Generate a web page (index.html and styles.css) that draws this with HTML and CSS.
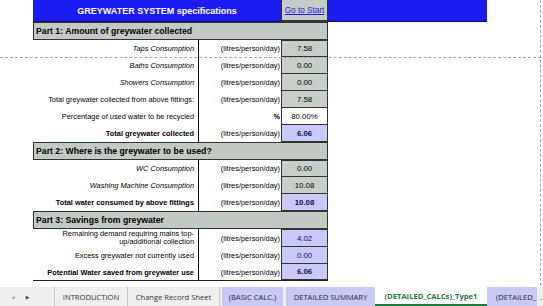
FILE: index.html
```html
<!DOCTYPE html>
<html lang="en">
  <head>
    <meta charset="UTF-8" />
    <title>Greywater System specifications</title>
    <link rel="stylesheet" href="styles.css">
  </head>
  <body>
    <div class="sheet">
      <!-- Title bar -->
      <div class="title-row">
        <div class="title">GREYWATER SYSTEM specifications</div>
        <div class="goto"><a href="#">Go to Start</a></div>
        <div class="title-fill"></div>
      </div>

      <!-- Part 1 -->
      <div class="part">Part 1: Amount of greywater collected</div>
      <div class="row">
        <div class="label italic">Taps Consumption</div>
        <div class="unit">(litres/person/day)</div>
        <div class="val grey first">7.58</div>
      </div>
      <div class="row">
        <div class="label italic">Baths Consumption</div>
        <div class="unit">(litres/person/day)</div>
        <div class="val grey">0.00</div>
      </div>
      <div class="row">
        <div class="label italic">Showers Consumption</div>
        <div class="unit">(litres/person/day)</div>
        <div class="val grey">0.00</div>
      </div>
      <div class="row">
        <div class="label">Total greywater collected from above fittings:</div>
        <div class="unit">(litres/person/day)</div>
        <div class="val grey">7.58</div>
      </div>
      <div class="row">
        <div class="label">Percentage of used water to be recycled</div>
        <div class="unit bold">%</div>
        <div class="val white">80.00%</div>
      </div>
      <div class="row">
        <div class="label bold">Total greywater collected</div>
        <div class="unit">(litres/person/day)</div>
        <div class="val blue bold">6.06</div>
      </div>

      <!-- Part 2 -->
      <div class="part">Part 2: Where is the greywater to be used?</div>
      <div class="row">
        <div class="label italic">WC Consumption</div>
        <div class="unit">(litres/person/day)</div>
        <div class="val grey first">0.00</div>
      </div>
      <div class="row">
        <div class="label italic">Washing Machine Consumption</div>
        <div class="unit">(litres/person/day)</div>
        <div class="val grey">10.08</div>
      </div>
      <div class="row">
        <div class="label bold">Total water consumed by above fittings</div>
        <div class="unit">(litres/person/day)</div>
        <div class="val blue bold">10.08</div>
      </div>

      <!-- Part 3 -->
      <div class="part">Part 3: Savings from greywater</div>
      <div class="row tall">
        <div class="label two">Remaining demand requiring mains top-<br>up/additional collection</div>
        <div class="unit">(litres/person/day)</div>
        <div class="val blue first">4.02</div>
      </div>
      <div class="row">
        <div class="label">Excess greywater not currently used</div>
        <div class="unit">(litres/person/day)</div>
        <div class="val blue">0.00</div>
      </div>
      <div class="row last">
        <div class="label bold">Potential Water saved from greywater use</div>
        <div class="unit">(litres/person/day)</div>
        <div class="val blue bold">6.06</div>
      </div>
    </div>

    <!-- page break lines -->
    <div class="break-h"></div>
    <div class="break-v"></div>

    <!-- Sheet tabs -->
    <div class="tabs">
      <div class="nav">
        <span class="arrow off">&#9664;</span>
        <span class="arrow">&#9654;</span>
      </div>
      <div class="tab intro">INTRODUCTION</div>
      <div class="tab change">Change Record Sheet</div>
      <div class="tab lav basic">(BASIC CALC.)</div>
      <div class="tab lav summary">DETAILED SUMMARY</div>
      <div class="tab active">(DETAILED_CALCs)_Type1</div>
      <div class="tab lav cut">(DETAILED_</div>
      <div class="more">.</div>
    </div>
  </body>
</html>
```

FILE: styles.css
```css
body {
  margin: 0;
  width: 543px;
  height: 306px;
  overflow: hidden;
  background: #ffffff;
  font-family: "Liberation Sans", Arial, sans-serif;
  color: #000;
  position: relative;
}

.sheet {
  padding-left: 33px;
  height: 287px;
}

/* Title bar */
.title-row {
  display: flex;
  width: 454px;
  height: 22px;
}

.title {
  width: 248px;
  background: #1c1cf2;
  border-bottom: 1px solid #101060;
  color: #fff;
  font-weight: bold;
  font-size: 9px;
  display: flex;
  align-items: center;
  justify-content: center;
  box-sizing: border-box;
}

.goto {
  width: 47px;
  background: #c6cdc6;
  border-left: 1px solid #333;
  border-right: 1px solid #333;
  border-bottom: 2px solid #333;
  display: flex;
  align-items: center;
  justify-content: center;
  font-size: 8.2px;
  box-sizing: border-box;
}

.goto a {
  color: #1a1ae0;
  text-decoration: underline;
}

.title-fill {
  flex: 1;
  background: #1c1cf2;
  border-bottom: 1px solid #101060;
}

/* Part headers */
.part {
  width: 295px;
  height: 18px;
  box-sizing: border-box;
  background: #c3cac3;
  border: 1px solid #333;
  font-weight: bold;
  font-size: 8.7px;
  padding-left: 2px;
  display: flex;
  align-items: center;
}

/* Data rows */
.row {
  display: grid;
  grid-template-columns: 166px 82px 47px;
  height: 17px;
  font-size: 7.4px;
}

.row.tall {
  height: 18px;
}

.row.last {
  border-bottom: 1px solid #222;
  width: 295px;
  height: 16px;
}

.label {
  border-right: 1px solid #111;
  display: flex;
  align-items: center;
  justify-content: flex-end;
  padding-right: 4px;
  text-align: right;
  white-space: nowrap;
}

.label.two {
  line-height: 8.5px;
}

.unit {
  display: flex;
  align-items: center;
  justify-content: flex-end;
  padding-right: 1px;
}

.val {
  display: flex;
  align-items: center;
  justify-content: center;
  border-left: 1px solid #333;
  border-right: 1px solid #333;
  border-bottom: 1px solid #333;
  box-sizing: border-box;
  font-size: 7.8px;
}

.val.first {
  border-top: 1px solid #333;
}

.val.grey {
  background: #c8cec8;
}

.val.white {
  background: #ffffff;
}

.val.blue {
  background: #c9c9fb;
  color: #10104a;
}

.italic {
  font-style: italic;
}

.bold {
  font-weight: bold;
}

/* Page break guides */
.break-h {
  position: absolute;
  left: 0;
  top: 57px;
  width: 541px;
  border-top: 1px dashed #a8a8a8;
}

.break-v {
  position: absolute;
  left: 540px;
  top: 0;
  height: 286px;
  border-left: 1px dashed #a8a8a8;
}

/* Sheet tabs */
.tabs {
  display: flex;
  height: 19px;
  background: #efefef;
  font-family: "Open Sans", "DejaVu Sans", sans-serif;
  font-size: 7.6px;
  color: #333;
}

.nav {
  width: 55px;
  display: flex;
  align-items: center;
  border-right: 1px solid #c8c8c8;
  box-sizing: border-box;
}

.arrow {
  font-size: 5px;
  color: #444;
  margin-left: 11px;
}

.arrow.off {
  color: #aaa;
}

.tab {
  display: flex;
  align-items: center;
  justify-content: center;
  white-space: nowrap;
  overflow: hidden;
  box-sizing: border-box;
}

.intro {
  width: 73px;
  border-right: 1px solid #c8c8c8;
}

.change {
  width: 92px;
  border-right: 1px solid #c8c8c8;
}

.lav {
  background: #c9c9f4;
  color: #1c1c5a;
}

.basic {
  width: 61px;
  margin-left: 2px;
  margin-right: 3px;
}

.summary {
  width: 89px;
}

.active {
  width: 112px;
  background: #ffffff;
  color: #1d7a3c;
  font-weight: bold;
  border-bottom: 2px solid #1d7a3c;
}

.cut {
  width: 50px;
  justify-content: flex-start;
  padding-left: 9px;
}

.more {
  padding-left: 3px;
  display: flex;
  align-items: center;
}
```
